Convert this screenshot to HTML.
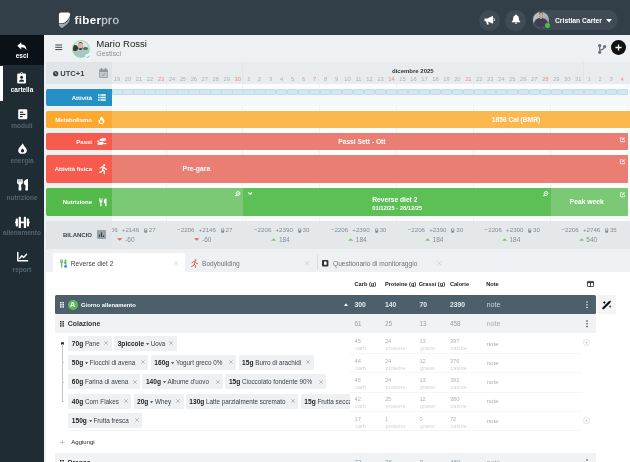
<!DOCTYPE html>
<html><head><meta charset="utf-8"><title>fiberpro</title>
<style>
*{box-sizing:border-box;margin:0;padding:0}
html,body{width:630px;height:462px;overflow:hidden;background:#fff;font-family:"Liberation Sans",sans-serif;}
body{position:relative}
.a{position:absolute}
.t{position:absolute;white-space:nowrap;line-height:1}
.b{font-weight:bold}
.w{color:#fff}
svg{position:absolute;overflow:visible}
#top{left:0;top:0;width:630px;height:35px;background:#323f49}
#side{left:0;top:35px;width:44px;height:427px;background:#1f2c34}
#hdr{left:44px;top:35px;width:586px;height:27px;background:#eef1f3}
.sl{position:absolute;left:0;width:44px;text-align:center;font-size:6.5px;font-weight:bold;color:#56636b;line-height:1}
.lab{position:absolute;left:46px;width:66px;border-radius:2px 0 0 2px}
.lt{position:absolute;right:13px;font-size:6px;font-weight:bold;color:#fff;line-height:1;white-space:nowrap}
.dn{position:absolute;top:77.3px;width:11px;text-align:center;font-size:5.8px;color:#adb3b8;line-height:1}
.dn.r{color:#ee8e88}
.chip{position:absolute;height:12px;background:#eceff1;border-radius:1px;font-size:5.8px;color:#333;line-height:12px;white-space:nowrap;padding:0 3px}
.chip b{font-size:6px;color:#222}
.chip i{font-style:normal;color:#777;margin-left:4px;font-size:6px}
.n1{position:absolute;font-size:5.8px;color:#b0b5b9;line-height:1}
.n2{position:absolute;font-size:5.5px;color:#cfd3d6;line-height:1}
</style></head><body><div id="root" style="position:absolute;left:0;top:0;width:630px;height:462px;overflow:hidden;will-change:transform;transform:translateZ(0)">

<div class="a" id="top"></div>
<div class="a" id="side"></div>
<div class="a" id="hdr"></div>
<svg style="left:58px;top:11px" width="14" height="18" viewBox="0 0 14 18">
<path d="M0.9 3.6 Q0.9 1.4 3.1 1.4 L10.2 1.5 Q12.5 1.6 12.1 3.9 Q11.5 7 9 9.6 Q6.8 12.2 4.4 12.2 L0.9 12.2 Z" fill="#fff"/>
<path d="M0.9 13 L4.6 13 Q7.2 13 9.4 10.6 Q11.4 8.4 12.1 5.8 Q12.2 10 9.6 12.8 L4.9 16.6 Q3.5 17.6 2.6 16.3 L0.9 14.2 Z" fill="#9fadb6"/>
</svg>
<div class="t b w" style="left:74.6px;top:14.1px;font-size:11.6px;letter-spacing:0.3px">fiber<span style="font-weight:normal;color:#bcc6cd;-webkit-text-stroke:0.3px #bcc6cd;letter-spacing:0.45px">pro</span></div>
<div class="a" style="left:479px;top:9.5px;width:21px;height:21px;border-radius:50%;background:#3f4c56"></div>
<div class="a" style="left:505px;top:9.5px;width:21px;height:21px;border-radius:50%;background:#3f4c56"></div>
<div class="a" style="left:531.5px;top:10px;width:86.5px;height:20px;border-radius:10px;background:#3f4c56"></div>
<svg style="left:483.8px;top:14.6px" width="11.6" height="10.6" viewBox="0 0 11 10"><path d="M0.5 3.2 H3.2 L8.6 0.6 V8.2 L3.2 5.8 H0.5 Z M2 5.8 H3.8 L4.6 9 H2.8 Z" fill="#fff"/><path d="M9.3 3 Q10.5 4.4 9.3 5.8" stroke="#fff" stroke-width="0.9" fill="none"/></svg>
<svg style="left:510.8px;top:14.2px" width="10" height="10.6" viewBox="0 0 10 11"><path d="M5 0.4 Q5.8 0.4 5.8 1.2 Q8 1.8 8 4.6 Q8 6.8 9.4 8 V8.6 H0.6 V8 Q2 6.8 2 4.6 Q2 1.8 4.2 1.2 Q4.2 0.4 5 0.4 Z M3.8 9.2 H6.2 Q6 10.4 5 10.4 Q4 10.4 3.8 9.2 Z" fill="#fff"/></svg>
<div class="a" style="left:532.8px;top:11.6px;width:16.5px;height:16.5px;border-radius:50%;background:linear-gradient(135deg,#c9c9c9 0%,#b3b3b3 50%,#8f8f8f 100%);overflow:hidden"><div class="a" style="left:1.6px;top:6.6px;width:13.4px;height:12px;border-radius:6px 6px 0 0;background:#3d4055"></div><div class="a" style="left:6.1px;top:0.5px;width:4.3px;height:5.9px;border-radius:48%;background:#5a4a42"></div><div class="a" style="left:6.3px;top:1.5px;width:3.9px;height:4.9px;border-radius:45% 45% 50% 50%;background:#c9a895"></div><div class="a" style="left:7.3px;top:6px;width:2px;height:1.6px;background:#b79683"></div></div>
<div class="a" style="left:545.3px;top:23.2px;width:5px;height:5px;border-radius:50%;background:#4fc13c"></div>
<div class="t b w" style="left:555px;top:17.6px;font-size:6.75px">Cristian Carter</div>
<svg style="left:605.5px;top:18.5px" width="6" height="4" viewBox="0 0 6 4"><path d="M0 0 H6 L3 3.6 Z" fill="#fff"/></svg>
<div class="a" style="left:0;top:35px;width:44px;height:29.5px;background:#0a1217"></div>
<div class="a" style="left:0;top:65.5px;width:3px;height:35px;background:#fff"></div>
<svg style="left:17px;top:42px" width="10" height="9" viewBox="0 0 10 9"><path d="M4.2 0.3 V2.3 Q9.6 2.4 9.4 8.4 Q8.2 5.2 4.2 5.3 V7.4 L0.3 3.8 Z" fill="#fff"/></svg>
<div class="sl" style="top:53px;color:#fff">esci</div>
<svg style="left:17.4px;top:71.8px" width="9.2" height="11.8" viewBox="0 0 9 11" preserveAspectRatio="none"><path d="M1.2 1.4 H3.2 Q3.3 0.2 4.5 0.2 Q5.7 0.2 5.8 1.4 H7.8 Q8.8 1.4 8.8 2.4 V9.8 Q8.8 10.8 7.8 10.8 H1.2 Q0.2 10.8 0.2 9.8 V2.4 Q0.2 1.4 1.2 1.4 Z" fill="#fff"/><circle cx="4.5" cy="1.5" r="0.6" fill="#1f2c34"/><circle cx="4.5" cy="5" r="1.4" fill="#1f2c34"/><path d="M2 9.2 Q2 7 4.5 7 Q7 7 7 9.2 Z" fill="#1f2c34"/></svg>
<div class="sl" style="top:87.2px;color:#fff;font-size:6.4px">cartella</div>
<svg style="left:17.5px;top:108.5px" width="9.5" height="10.5" viewBox="0 0 9.5 10.5"><rect x="0.2" y="0.2" width="9.1" height="10.1" rx="1.3" fill="#fff"/><rect x="2" y="2.6" width="3.2" height="1.2" fill="#1f2c34"/><rect x="2" y="4.8" width="5.4" height="1.2" fill="#1f2c34"/><rect x="2" y="7" width="2.6" height="1.2" fill="#1f2c34"/></svg>
<div class="sl" style="top:123.2px">moduli</div>
<svg style="left:17.5px;top:143px" width="9" height="11" viewBox="0 0 9 11"><path d="M4.8 0.2 Q5.4 2.4 7.2 4.2 Q8.8 5.8 8.8 7.4 Q8.8 10.8 4.5 10.8 Q0.2 10.8 0.2 7.4 Q0.2 5.6 1.8 4 Q4 2 4.8 0.2 Z" fill="#fff"/><path d="M4.5 5.6 Q6.2 6.8 6.2 8 Q6.2 9.4 4.5 9.4 Q2.8 9.4 2.8 8 Q2.8 7 4.5 5.6 Z" fill="#1f2c34"/></svg>
<div class="sl" style="top:158.4px">energia</div>
<svg style="left:16.9px;top:179.1px" width="11" height="11.4" viewBox="0 0 416 512" preserveAspectRatio="none"><path d="M207.9 15.2c.8 4.7 16.1 94.5 16.1 128.8 0 52.3-27.8 89.6-68.9 104.6L168 486.7c.7 13.7-10.2 25.3-24 25.3H80c-13.7 0-24.7-11.5-24-25.3l12.9-238.1C27.7 233.6 0 196.2 0 144 0 109.6 15.3 19.9 16.1 15.2 19.3-5.1 61.4-5.4 64 16.3v141.2c1.3 3.4 15.1 3.2 16 0 1.4-25.3 7.9-139.2 8-141.8 3.3-20.8 44.7-20.8 47.9 0 .2 2.7 6.6 116.5 8 141.8.9 3.2 14.8 3.4 16 0V16.3c2.6-21.6 44.8-21.4 48-1.1zm119.2 285.7l-15 185.1c-1.2 14 9.9 26 23.9 26h56c13.3 0 24-10.7 24-24V24c0-13.2-10.7-24-24-24-82.5 0-221.4 178.5-64.9 300.9z" fill="#fff"/></svg>
<div class="sl" style="top:194.7px">nutrizione</div>
<svg style="left:14.7px;top:215.6px" width="14.7" height="12.8" viewBox="0 0 640 512" preserveAspectRatio="none"><path d="M104 96H56c-13.3 0-24 10.7-24 24v104H8c-4.4 0-8 3.6-8 8v48c0 4.4 3.6 8 8 8h24v104c0 13.3 10.7 24 24 24h48c13.3 0 24-10.7 24-24V120c0-13.3-10.7-24-24-24zm528 128h-24V120c0-13.3-10.7-24-24-24h-48c-13.3 0-24 10.7-24 24v272c0 13.3 10.7 24 24 24h48c13.3 0 24-10.7 24-24V288h24c4.4 0 8-3.6 8-8v-48c0-4.4-3.6-8-8-8zM456 32h-48c-13.3 0-24 10.7-24 24v168H256V56c0-13.3-10.7-24-24-24h-48c-13.3 0-24 10.7-24 24v400c0 13.3 10.7 24 24 24h48c13.3 0 24-10.7 24-24V288h128v168c0 13.3 10.7 24 24 24h48c13.3 0 24-10.7 24-24V56c0-13.3-10.7-24-24-24z" fill="#fff"/></svg>
<div class="sl" style="top:230.3px">allenamento</div>
<svg style="left:16.5px;top:251.5px" width="11" height="10" viewBox="0 0 11 10"><path d="M0.8 0.4 V8.8 H10.6" stroke="#fff" stroke-width="1.5" fill="none" stroke-linejoin="round" stroke-linecap="round"/><path d="M2.8 6.2 L4.9 3.8 L6.6 5.4 L9.6 2.2" stroke="#fff" stroke-width="1.4" fill="none" stroke-linejoin="round" stroke-linecap="round"/></svg>
<div class="sl" style="top:266.6px">report</div>
<svg style="left:54.5px;top:44px" width="8" height="7" viewBox="0 0 8 7"><path d="M0.3 1 H7.2 M0.3 3.3 H7.2 M0.3 5.6 H7.2" stroke="#333" stroke-width="0.9"/></svg>
<div class="a" style="left:71.6px;top:39.6px;width:18.3px;height:18.3px;border-radius:50%;background:#9fdc99"></div>
<div class="a" style="left:72.7px;top:40.7px;width:16.1px;height:16.1px;border-radius:50%;background:linear-gradient(180deg,#dfe9ec 0%,#d3e0e3 40%,#a6c9cd 58%,#a8c4c5 100%);overflow:hidden"><div class="a" style="left:-1px;top:4.2px;width:6.4px;height:6.4px;border-radius:45% 55% 40% 50%;background:#2f3d2f"></div><div class="a" style="left:10.6px;top:6.4px;width:4.4px;height:3.4px;border-radius:50%;background:#5c6f62"></div><div class="a" style="left:1.2px;top:9px;width:13.6px;height:9px;border-radius:6px 6px 0 0;background:#a9c5c6"></div><div class="a" style="left:5.3px;top:0.9px;width:5.2px;height:8.2px;border-radius:50% 50% 46% 46%;background:#3b3a38"></div><div class="a" style="left:5.7px;top:2.7px;width:4.4px;height:5.2px;border-radius:40% 40% 50% 50%;background:#dcb9a3"></div><div class="a" style="left:6.4px;top:7.2px;width:3px;height:1.3px;border-radius:40%;background:#5a4236"></div></div>
<div class="a" style="left:85.4px;top:54.2px;width:5.6px;height:5.6px;border-radius:50%;background:#f5f7f8"></div>
<svg style="left:86px;top:55.3px" width="4.4" height="3.6" viewBox="0 0 5 4"><path d="M0.5 2 L1.9 3.3 L4.5 0.5" stroke="#4a9bd1" stroke-width="0.9" fill="none"/></svg>
<div class="t" style="left:96.3px;top:39.1px;font-size:9.6px;color:#222">Mario Rossi</div>
<div class="t" style="left:96.2px;top:50.2px;font-size:7px;color:#8a9096">Gestisci</div>
<svg style="left:598px;top:43.5px" width="8" height="10" viewBox="0 0 8 10"><circle cx="1.7" cy="1.7" r="1.6" fill="#6a7177"/><circle cx="1.7" cy="8.3" r="1.6" fill="#6a7177"/><circle cx="6.6" cy="2.6" r="1.6" fill="#6a7177"/><path d="M1.7 1.7 V8.3 M6.6 2.6 Q6.6 5.6 1.7 6.2" stroke="#6a7177" stroke-width="1.2" fill="none"/></svg>
<div class="a" style="left:610.8px;top:40.3px;width:14.8px;height:14.8px;border-radius:50%;background:#111"></div>
<svg style="left:614.7px;top:44.2px" width="7" height="7" viewBox="0 0 7 7"><path d="M3.5 0.4 V6.6 M0.4 3.5 H6.6" stroke="#fff" stroke-width="1.3"/></svg>
<div class="a" style="left:44px;top:62px;width:586px;height:187px;background:#fbfcfd"></div>
<div class="a" style="left:44px;top:62px;width:68px;height:187px;background:#eef1f3"></div>
<div class="a" style="left:112px;top:62px;width:518px;height:21.5px;background:#e9ecef"></div>
<div class="a" style="left:46px;top:62px;width:66px;height:21.5px;background:#e1e5e8"></div>
<svg style="left:52.7px;top:71.3px" width="5.4" height="5.4" viewBox="0 0 6 6"><circle cx="3" cy="3" r="2.9" fill="#3a4248"/><path d="M3 1.2 V3.2 L4.2 3.9" stroke="#e1e5e8" stroke-width="0.7" fill="none"/></svg>
<div class="t b" style="left:60.2px;top:70.4px;font-size:7.6px;color:#3a4248">UTC+1</div>
<svg style="left:99px;top:68px" width="9" height="10" viewBox="0 0 9 10"><rect x="0.2" y="1.2" width="8.6" height="8.8" rx="0.8" fill="#8d969c"/><rect x="1.8" y="0" width="1.4" height="2.2" rx="0.4" fill="#8d969c"/><rect x="5.8" y="0" width="1.4" height="2.2" rx="0.4" fill="#8d969c"/><rect x="0.9" y="4" width="7.2" height="5.3" fill="#c3c9cd"/><path d="M2.8 6.5 L4 7.7 L6.2 5.2" stroke="#8d969c" stroke-width="1" fill="none"/></svg>
<div class="dn" style="left:111.50px">19</div>
<div class="dn" style="left:122.48px">20</div>
<div class="dn" style="left:133.46px">21</div>
<div class="dn" style="left:144.44px">22</div>
<div class="dn r" style="left:155.42px">23</div>
<div class="dn" style="left:166.40px">24</div>
<div class="dn" style="left:177.38px">25</div>
<div class="dn" style="left:188.36px">26</div>
<div class="dn" style="left:199.34px">27</div>
<div class="dn" style="left:210.32px">28</div>
<div class="dn" style="left:221.30px">29</div>
<div class="dn r" style="left:232.28px">30</div>
<div class="dn" style="left:243.26px">1</div>
<div class="dn" style="left:254.24px">2</div>
<div class="dn" style="left:265.22px">3</div>
<div class="dn" style="left:276.20px">4</div>
<div class="dn" style="left:287.18px">5</div>
<div class="dn" style="left:298.16px">6</div>
<div class="dn r" style="left:309.14px">7</div>
<div class="dn" style="left:320.12px">8</div>
<div class="dn" style="left:331.10px">9</div>
<div class="dn" style="left:342.08px">10</div>
<div class="dn" style="left:353.06px">11</div>
<div class="dn" style="left:364.04px">12</div>
<div class="dn" style="left:375.02px">13</div>
<div class="dn r" style="left:386.00px">14</div>
<div class="dn" style="left:396.98px">15</div>
<div class="dn" style="left:407.96px">16</div>
<div class="dn" style="left:418.94px">17</div>
<div class="dn" style="left:429.92px">18</div>
<div class="dn" style="left:440.90px">19</div>
<div class="dn" style="left:451.88px">20</div>
<div class="dn r" style="left:462.86px">21</div>
<div class="dn" style="left:473.84px">22</div>
<div class="dn" style="left:484.82px">23</div>
<div class="dn" style="left:495.80px">24</div>
<div class="dn" style="left:506.78px">25</div>
<div class="dn" style="left:517.76px">26</div>
<div class="dn" style="left:528.74px">27</div>
<div class="dn r" style="left:539.72px">28</div>
<div class="dn" style="left:550.70px">29</div>
<div class="dn" style="left:561.68px">30</div>
<div class="dn" style="left:572.66px">31</div>
<div class="dn" style="left:583.64px">1</div>
<div class="dn" style="left:594.62px">2</div>
<div class="dn" style="left:605.60px">3</div>
<div class="dn r" style="left:616.58px">4</div>
<div class="t" style="left:392px;top:68px;font-size:6px;color:#333;font-weight:bold">dicembre 2025</div>
<div class="a" style="left:242px;top:62px;width:1px;height:21.5px;background:#e1e5e8"></div>
<div class="a" style="left:583px;top:62px;width:1px;height:21.5px;background:#e1e5e8"></div>
<div class="a" style="left:166px;top:83.5px;width:1px;height:137.5px;background:#f0f2f4"></div>
<div class="a" style="left:242px;top:83.5px;width:1px;height:137.5px;background:#f0f2f4"></div>
<div class="a" style="left:319px;top:83.5px;width:1px;height:137.5px;background:#f0f2f4"></div>
<div class="a" style="left:396px;top:83.5px;width:1px;height:137.5px;background:#f0f2f4"></div>
<div class="a" style="left:473px;top:83.5px;width:1px;height:137.5px;background:#f0f2f4"></div>
<div class="a" style="left:550px;top:83.5px;width:1px;height:137.5px;background:#f0f2f4"></div>
<div class="a" style="left:627px;top:83.5px;width:1px;height:137.5px;background:#f0f2f4"></div>
<div class="a" style="left:112px;top:89.2px;width:518px;height:16.5px;background:#f5f9fc"></div>
<div class="a" style="left:111.50px;top:89.2px;width:11.28px;height:5.6px;background:#d3e6f2;border:0.6px solid #c0dbea;border-radius:1px"></div>
<div class="a" style="left:122.48px;top:89.2px;width:11.28px;height:5.6px;background:#d3e6f2;border:0.6px solid #c0dbea;border-radius:1px"></div>
<div class="a" style="left:133.46px;top:89.2px;width:11.28px;height:5.6px;background:#d3e6f2;border:0.6px solid #c0dbea;border-radius:1px"></div>
<div class="a" style="left:144.44px;top:89.2px;width:11.28px;height:5.6px;background:#d3e6f2;border:0.6px solid #c0dbea;border-radius:1px"></div>
<div class="a" style="left:155.42px;top:89.2px;width:11.28px;height:5.6px;background:#d3e6f2;border:0.6px solid #c0dbea;border-radius:1px"></div>
<div class="a" style="left:166.40px;top:89.2px;width:11.28px;height:5.6px;background:#d3e6f2;border:0.6px solid #c0dbea;border-radius:1px"></div>
<div class="a" style="left:177.38px;top:89.2px;width:11.28px;height:5.6px;background:#d3e6f2;border:0.6px solid #c0dbea;border-radius:1px"></div>
<div class="a" style="left:188.36px;top:89.2px;width:11.28px;height:5.6px;background:#d3e6f2;border:0.6px solid #c0dbea;border-radius:1px"></div>
<div class="a" style="left:199.34px;top:89.2px;width:11.28px;height:5.6px;background:#d3e6f2;border:0.6px solid #c0dbea;border-radius:1px"></div>
<div class="a" style="left:210.32px;top:89.2px;width:11.28px;height:5.6px;background:#d3e6f2;border:0.6px solid #c0dbea;border-radius:1px"></div>
<div class="a" style="left:221.30px;top:89.2px;width:11.28px;height:5.6px;background:#d3e6f2;border:0.6px solid #c0dbea;border-radius:1px"></div>
<div class="a" style="left:232.28px;top:89.2px;width:11.28px;height:5.6px;background:#d3e6f2;border:0.6px solid #c0dbea;border-radius:1px"></div>
<div class="a" style="left:243.26px;top:89.2px;width:11.28px;height:5.6px;background:#d3e6f2;border:0.6px solid #c0dbea;border-radius:1px"></div>
<div class="a" style="left:254.24px;top:89.2px;width:11.28px;height:5.6px;background:#d3e6f2;border:0.6px solid #c0dbea;border-radius:1px"></div>
<div class="a" style="left:265.22px;top:89.2px;width:11.28px;height:5.6px;background:#d3e6f2;border:0.6px solid #c0dbea;border-radius:1px"></div>
<div class="a" style="left:276.20px;top:89.2px;width:11.28px;height:5.6px;background:#d3e6f2;border:0.6px solid #c0dbea;border-radius:1px"></div>
<div class="a" style="left:287.18px;top:89.2px;width:11.28px;height:5.6px;background:#d3e6f2;border:0.6px solid #c0dbea;border-radius:1px"></div>
<div class="a" style="left:298.16px;top:89.2px;width:11.28px;height:5.6px;background:#d3e6f2;border:0.6px solid #c0dbea;border-radius:1px"></div>
<div class="a" style="left:309.14px;top:89.2px;width:11.28px;height:5.6px;background:#d3e6f2;border:0.6px solid #c0dbea;border-radius:1px"></div>
<div class="a" style="left:320.12px;top:89.2px;width:11.28px;height:5.6px;background:#d3e6f2;border:0.6px solid #c0dbea;border-radius:1px"></div>
<div class="a" style="left:331.10px;top:89.2px;width:11.28px;height:5.6px;background:#d3e6f2;border:0.6px solid #c0dbea;border-radius:1px"></div>
<div class="a" style="left:342.08px;top:89.2px;width:11.28px;height:5.6px;background:#d3e6f2;border:0.6px solid #c0dbea;border-radius:1px"></div>
<div class="a" style="left:353.06px;top:89.2px;width:11.28px;height:5.6px;background:#d3e6f2;border:0.6px solid #c0dbea;border-radius:1px"></div>
<div class="a" style="left:364.04px;top:89.2px;width:11.28px;height:5.6px;background:#d3e6f2;border:0.6px solid #c0dbea;border-radius:1px"></div>
<div class="a" style="left:375.02px;top:89.2px;width:11.28px;height:5.6px;background:#d3e6f2;border:0.6px solid #c0dbea;border-radius:1px"></div>
<div class="a" style="left:386.00px;top:89.2px;width:11.28px;height:5.6px;background:#d3e6f2;border:0.6px solid #c0dbea;border-radius:1px"></div>
<div class="a" style="left:396.98px;top:89.2px;width:11.28px;height:5.6px;background:#d3e6f2;border:0.6px solid #c0dbea;border-radius:1px"></div>
<div class="a" style="left:407.96px;top:89.2px;width:11.28px;height:5.6px;background:#d3e6f2;border:0.6px solid #c0dbea;border-radius:1px"></div>
<div class="a" style="left:418.94px;top:89.2px;width:11.28px;height:5.6px;background:#d3e6f2;border:0.6px solid #c0dbea;border-radius:1px"></div>
<div class="a" style="left:429.92px;top:89.2px;width:11.28px;height:5.6px;background:#d3e6f2;border:0.6px solid #c0dbea;border-radius:1px"></div>
<div class="a" style="left:440.90px;top:89.2px;width:11.28px;height:5.6px;background:#d3e6f2;border:0.6px solid #c0dbea;border-radius:1px"></div>
<div class="a" style="left:451.88px;top:89.2px;width:11.28px;height:5.6px;background:#d3e6f2;border:0.6px solid #c0dbea;border-radius:1px"></div>
<div class="a" style="left:462.86px;top:89.2px;width:11.28px;height:5.6px;background:#d3e6f2;border:0.6px solid #c0dbea;border-radius:1px"></div>
<div class="a" style="left:473.84px;top:89.2px;width:11.28px;height:5.6px;background:#d3e6f2;border:0.6px solid #c0dbea;border-radius:1px"></div>
<div class="a" style="left:484.82px;top:89.2px;width:11.28px;height:5.6px;background:#d3e6f2;border:0.6px solid #c0dbea;border-radius:1px"></div>
<div class="a" style="left:495.80px;top:89.2px;width:11.28px;height:5.6px;background:#d3e6f2;border:0.6px solid #c0dbea;border-radius:1px"></div>
<div class="a" style="left:506.78px;top:89.2px;width:11.28px;height:5.6px;background:#d3e6f2;border:0.6px solid #c0dbea;border-radius:1px"></div>
<div class="a" style="left:517.76px;top:89.2px;width:11.28px;height:5.6px;background:#d3e6f2;border:0.6px solid #c0dbea;border-radius:1px"></div>
<div class="a" style="left:528.74px;top:89.2px;width:11.28px;height:5.6px;background:#d3e6f2;border:0.6px solid #c0dbea;border-radius:1px"></div>
<div class="a" style="left:539.72px;top:89.2px;width:11.28px;height:5.6px;background:#d3e6f2;border:0.6px solid #c0dbea;border-radius:1px"></div>
<div class="a" style="left:550.70px;top:89.2px;width:11.28px;height:5.6px;background:#d3e6f2;border:0.6px solid #c0dbea;border-radius:1px"></div>
<div class="a" style="left:561.68px;top:89.2px;width:11.28px;height:5.6px;background:#d3e6f2;border:0.6px solid #c0dbea;border-radius:1px"></div>
<div class="a" style="left:572.66px;top:89.2px;width:11.28px;height:5.6px;background:#d3e6f2;border:0.6px solid #c0dbea;border-radius:1px"></div>
<div class="a" style="left:583.64px;top:89.2px;width:11.28px;height:5.6px;background:#d3e6f2;border:0.6px solid #c0dbea;border-radius:1px"></div>
<div class="a" style="left:594.62px;top:89.2px;width:11.28px;height:5.6px;background:#d3e6f2;border:0.6px solid #c0dbea;border-radius:1px"></div>
<div class="a" style="left:605.60px;top:89.2px;width:11.28px;height:5.6px;background:#d3e6f2;border:0.6px solid #c0dbea;border-radius:1px"></div>
<div class="a" style="left:616.58px;top:89.2px;width:11.28px;height:5.6px;background:#d3e6f2;border:0.6px solid #c0dbea;border-radius:1px"></div>
<div class="lab" style="top:89.2px;height:16.5px;background:#2490c6"></div>
<div class="lab" style="top:111px;height:16.8px;background:#fda92f"></div>
<div class="lab" style="top:133px;height:16.7px;background:#f65b4d"></div>
<div class="lab" style="top:155.3px;height:27.4px;background:#f65b4d"></div>
<div class="lab" style="top:188.3px;height:27.4px;background:#55ba4c"></div>
<div class="lt" style="right:538px;top:94.9px">Attività</div>
<div class="lt" style="right:538px;top:116.9px">Metabolismo</div>
<div class="lt" style="right:538px;top:138.7px">Passi</div>
<div class="lt" style="right:538px;top:166px">Attività fisica</div>
<div class="lt" style="right:538px;top:199px">Nutrizione</div>
<svg style="left:98px;top:93.8px" width="8" height="7" viewBox="0 0 8 7"><path d="M0 0.9 H1.6 M2.4 0.9 H7.8 M0 3.5 H1.6 M2.4 3.5 H7.8 M0 6.1 H1.6 M2.4 6.1 H7.8" stroke="#fff" stroke-width="1.5"/></svg>
<svg style="left:98.2px;top:116px" width="6.8" height="8.2" viewBox="0 0 9 11"><path d="M4.9 0.2 C5.2 1.8 7 2.8 8 4.6 C9.4 7.2 8 10.8 4.5 10.8 C1 10.8 -0.4 7.4 1.1 4.8 C1.5 5.6 2.1 6 2.8 5.8 C2.4 3.4 3.3 1.4 4.9 0.2 Z" fill="#fff"/><circle cx="4.6" cy="7.6" r="2" fill="#fda92f"/></svg>
<svg style="left:97px;top:138.2px" width="9.5" height="7.5" viewBox="0 0 9.5 7.5"><ellipse cx="5.9" cy="1.7" rx="3.3" ry="1.5" fill="#fff" transform="rotate(-8 5.9 1.7)"/><ellipse cx="3.6" cy="5.5" rx="3.3" ry="1.5" fill="#fff" transform="rotate(-8 3.6 5.5)"/><rect x="0" y="2.6" width="2.4" height="1.1" fill="#fff"/><rect x="7" y="5" width="2.4" height="1.1" fill="#fff"/></svg>
<svg style="left:98.5px;top:164px" width="8" height="10" viewBox="0 0 8 10"><circle cx="5.2" cy="1.1" r="1.05" fill="#fff"/><path d="M1.2 4 L3.2 2.8 L5 3 L6 4.8 L7.6 5.2 M4.6 3 L3.6 5.8 L5.4 7.2 L5.2 9.6 M3.6 6 L2.6 7.8 L0.6 8.4" stroke="#fff" stroke-width="1.25" fill="none" stroke-linecap="round" stroke-linejoin="round"/></svg>
<svg style="left:98.6px;top:198px" width="8" height="8.4" viewBox="0 0 10.5 11"><path d="M0.4 0.2 H1.3 V3.4 H2 V0.2 H2.9 V3.4 H3.6 V0.2 H4.5 V4 Q4.5 5.4 3.3 5.8 V10.8 H1.6 V5.8 Q0.4 5.4 0.4 4 Z" fill="#fff"/><path d="M9.8 0.2 V10.8 H8.1 V7 H6.4 V3.6 Q6.4 0.6 9.8 0.2 Z" fill="#fff"/></svg>
<div class="a" style="left:112px;top:111px;width:518px;height:16.8px;background:#fbb84f"></div>
<div class="t b w" style="left:491.8px;top:116.5px;font-size:6.65px">1856 Cal (BMR)</div>
<div class="a" style="left:112px;top:133px;width:516px;height:16.7px;background:#ea7e72;border-radius:0 1px 1px 0"></div>
<div class="t b w" style="left:338.3px;top:138.9px;font-size:6.65px">Passi Sett - Ott</div>
<div class="a" style="left:112px;top:155.2px;width:516px;height:27.4px;background:#ea7e72;border-radius:0 1px 1px 0"></div>
<div class="t b w" style="left:182.6px;top:165.9px;font-size:6.8px">Pre-gara</div>
<div class="a" style="left:112px;top:188.3px;width:131px;height:27.4px;background:#7bc974"></div>
<div class="a" style="left:243px;top:188.3px;width:308px;height:27.4px;background:#5dc056"></div>
<div class="a" style="left:551px;top:188.3px;width:77px;height:27.4px;background:#7bc974;border-radius:0 1px 1px 0"></div>
<div class="t b w" style="left:372.3px;top:196.6px;font-size:6.65px">Reverse diet 2</div>
<div class="t b w" style="left:372.3px;top:206px;font-size:5.75px">01/12/25 - 28/12/25</div>
<div class="t b w" style="left:569.7px;top:199px;font-size:6.75px">Peak week</div>
<svg style="left:620.0px;top:136.5px" width="5.2" height="5.2" viewBox="0 0 5 5"><path d="M2.4 0.7 H0.4 V4.6 H4.3 V2.8" stroke="#fff" stroke-width="0.7" fill="none"/><path d="M1.8 3.2 L2 2.2 L4 0.2 L4.8 1 L2.8 3 Z" fill="#fff"/></svg>
<svg style="left:620.0px;top:158.6px" width="5.2" height="5.2" viewBox="0 0 5 5"><path d="M2.4 0.7 H0.4 V4.6 H4.3 V2.8" stroke="#fff" stroke-width="0.7" fill="none"/><path d="M1.8 3.2 L2 2.2 L4 0.2 L4.8 1 L2.8 3 Z" fill="#fff"/></svg>
<svg style="left:620.0px;top:191.5px" width="5.2" height="5.2" viewBox="0 0 5 5"><path d="M2.4 0.7 H0.4 V4.6 H4.3 V2.8" stroke="#fff" stroke-width="0.7" fill="none"/><path d="M1.8 3.2 L2 2.2 L4 0.2 L4.8 1 L2.8 3 Z" fill="#fff"/></svg>
<svg style="left:234.9px;top:191.0px" width="5.6" height="5.6" viewBox="0 0 5 5"><circle cx="2.7" cy="2.2" r="1.7" stroke="#fff" stroke-width="0.8" fill="none"/><path d="M1.5 3.4 L0.4 4.6" stroke="#fff" stroke-width="0.9"/><circle cx="2.7" cy="2.2" r="0.6" fill="#fff"/></svg>
<svg style="left:542.6px;top:191.0px" width="5.6" height="5.6" viewBox="0 0 5 5"><circle cx="2.7" cy="2.2" r="1.7" stroke="#fff" stroke-width="0.8" fill="none"/><path d="M1.5 3.4 L0.4 4.6" stroke="#fff" stroke-width="0.9"/><circle cx="2.7" cy="2.2" r="0.6" fill="#fff"/></svg>
<svg style="left:247.5px;top:192px" width="4.4" height="3" viewBox="0 0 4.4 3"><path d="M0.4 0.5 L2.2 2.3 L4 0.5" stroke="#fff" stroke-width="1.1" fill="none"/></svg>
<div class="a" style="left:46px;top:221px;width:584px;height:27.7px;background:#e1e5e8"></div>
<div class="a" style="left:112px;top:221px;width:518px;height:27.7px;background:#e4e8eb"></div>
<div class="t b" style="left:63px;top:231.7px;font-size:6px;color:#3a4248">BILANCIO</div>
<svg style="left:96.5px;top:230px" width="9" height="9" viewBox="0 0 9 9"><rect x="0" y="0" width="9" height="9" rx="1" fill="#98a1a7"/><path d="M2.5 4.4 V7 M4.5 2.4 V7 M6.5 5.4 V7" stroke="#3a4248" stroke-width="1.1"/></svg>
<div class="a" style="left:112px;top:221px;width:518px;height:27.7px;overflow:hidden">
<div class="t" style="left:-11.7px;top:6.3px;font-size:6.2px;color:#868e94">−2206</div>
<div class="t" style="left:9.8px;top:6.3px;font-size:6.2px;color:#868e94">+2146</div>
<svg style="left:32.0px;top:6.8px" width="3.4" height="5" viewBox="0 0 3.6 5"><rect x="0.2" y="0.3" width="3.2" height="4.5" rx="0.9" fill="#868e94"/><rect x="0.9" y="1" width="1.8" height="1.5" rx="0.4" fill="#e4e8eb"/></svg>
<div class="t" style="left:36.8px;top:6.3px;font-size:6.2px;color:#868e94">27</div>
<svg style="left:5.4px;top:17.3px" width="5.4" height="3" viewBox="0 0 5.4 3"><path d="M0 0.2 H5.4 L2.7 2.8 Z" fill="#e4606a"/></svg>
<div class="t" style="left:13.2px;top:15.5px;font-size:6.5px;color:#868e94">-60</div>
<div class="t" style="left:65.1px;top:6.3px;font-size:6.2px;color:#868e94">−2206</div>
<div class="t" style="left:86.6px;top:6.3px;font-size:6.2px;color:#868e94">+2146</div>
<svg style="left:108.8px;top:6.8px" width="3.4" height="5" viewBox="0 0 3.6 5"><rect x="0.2" y="0.3" width="3.2" height="4.5" rx="0.9" fill="#868e94"/><rect x="0.9" y="1" width="1.8" height="1.5" rx="0.4" fill="#e4e8eb"/></svg>
<div class="t" style="left:113.6px;top:6.3px;font-size:6.2px;color:#868e94">27</div>
<svg style="left:82.2px;top:17.3px" width="5.4" height="3" viewBox="0 0 5.4 3"><path d="M0 0.2 H5.4 L2.7 2.8 Z" fill="#e4606a"/></svg>
<div class="t" style="left:90.0px;top:15.5px;font-size:6.5px;color:#868e94">-60</div>
<div class="t" style="left:142.0px;top:6.3px;font-size:6.2px;color:#868e94">−2206</div>
<div class="t" style="left:163.5px;top:6.3px;font-size:6.2px;color:#868e94">+2390</div>
<svg style="left:185.7px;top:6.8px" width="3.4" height="5" viewBox="0 0 3.6 5"><rect x="0.2" y="0.3" width="3.2" height="4.5" rx="0.9" fill="#868e94"/><rect x="0.9" y="1" width="1.8" height="1.5" rx="0.4" fill="#e4e8eb"/></svg>
<div class="t" style="left:190.5px;top:6.3px;font-size:6.2px;color:#868e94">30</div>
<svg style="left:159.1px;top:17.3px" width="5.4" height="3" viewBox="0 0 5.4 3"><path d="M0 2.8 H5.4 L2.7 0.2 Z" fill="#7cc876"/></svg>
<div class="t" style="left:166.9px;top:15.5px;font-size:6.5px;color:#868e94">184</div>
<div class="t" style="left:218.8px;top:6.3px;font-size:6.2px;color:#868e94">−2206</div>
<div class="t" style="left:240.3px;top:6.3px;font-size:6.2px;color:#868e94">+2390</div>
<svg style="left:262.6px;top:6.8px" width="3.4" height="5" viewBox="0 0 3.6 5"><rect x="0.2" y="0.3" width="3.2" height="4.5" rx="0.9" fill="#868e94"/><rect x="0.9" y="1" width="1.8" height="1.5" rx="0.4" fill="#e4e8eb"/></svg>
<div class="t" style="left:267.4px;top:6.3px;font-size:6.2px;color:#868e94">30</div>
<svg style="left:236.0px;top:17.3px" width="5.4" height="3" viewBox="0 0 5.4 3"><path d="M0 2.8 H5.4 L2.7 0.2 Z" fill="#7cc876"/></svg>
<div class="t" style="left:243.8px;top:15.5px;font-size:6.5px;color:#868e94">184</div>
<div class="t" style="left:295.7px;top:6.3px;font-size:6.2px;color:#868e94">−2206</div>
<div class="t" style="left:317.2px;top:6.3px;font-size:6.2px;color:#868e94">+2390</div>
<svg style="left:339.4px;top:6.8px" width="3.4" height="5" viewBox="0 0 3.6 5"><rect x="0.2" y="0.3" width="3.2" height="4.5" rx="0.9" fill="#868e94"/><rect x="0.9" y="1" width="1.8" height="1.5" rx="0.4" fill="#e4e8eb"/></svg>
<div class="t" style="left:344.2px;top:6.3px;font-size:6.2px;color:#868e94">30</div>
<svg style="left:312.8px;top:17.3px" width="5.4" height="3" viewBox="0 0 5.4 3"><path d="M0 2.8 H5.4 L2.7 0.2 Z" fill="#7cc876"/></svg>
<div class="t" style="left:320.6px;top:15.5px;font-size:6.5px;color:#868e94">184</div>
<div class="t" style="left:372.6px;top:6.3px;font-size:6.2px;color:#868e94">−2206</div>
<div class="t" style="left:394.1px;top:6.3px;font-size:6.2px;color:#868e94">+2390</div>
<svg style="left:416.3px;top:6.8px" width="3.4" height="5" viewBox="0 0 3.6 5"><rect x="0.2" y="0.3" width="3.2" height="4.5" rx="0.9" fill="#868e94"/><rect x="0.9" y="1" width="1.8" height="1.5" rx="0.4" fill="#e4e8eb"/></svg>
<div class="t" style="left:421.1px;top:6.3px;font-size:6.2px;color:#868e94">30</div>
<svg style="left:389.7px;top:17.3px" width="5.4" height="3" viewBox="0 0 5.4 3"><path d="M0 2.8 H5.4 L2.7 0.2 Z" fill="#7cc876"/></svg>
<div class="t" style="left:397.5px;top:15.5px;font-size:6.5px;color:#868e94">184</div>
<div class="t" style="left:449.4px;top:6.3px;font-size:6.2px;color:#868e94">−2206</div>
<div class="t" style="left:470.9px;top:6.3px;font-size:6.2px;color:#868e94">+2746</div>
<svg style="left:493.1px;top:6.8px" width="3.4" height="5" viewBox="0 0 3.6 5"><rect x="0.2" y="0.3" width="3.2" height="4.5" rx="0.9" fill="#868e94"/><rect x="0.9" y="1" width="1.8" height="1.5" rx="0.4" fill="#e4e8eb"/></svg>
<div class="t" style="left:497.9px;top:6.3px;font-size:6.2px;color:#868e94">35</div>
<svg style="left:466.5px;top:17.3px" width="5.4" height="3" viewBox="0 0 5.4 3"><path d="M0 2.8 H5.4 L2.7 0.2 Z" fill="#7cc876"/></svg>
<div class="t" style="left:474.3px;top:15.5px;font-size:6.5px;color:#868e94">540</div>
</div>
<div class="a" style="left:44px;top:248.7px;width:586px;height:23.3px;background:#eef1f3"></div>
<div class="a" style="left:44px;top:272px;width:2px;height:190px;background:#eef1f3"></div>
<div class="a" style="left:52.7px;top:253.2px;width:132px;height:19px;background:#fff;border-radius:1.5px 1.5px 0 0"></div>
<svg style="left:59.5px;top:258.5px" width="7" height="9" viewBox="0 0 7 9"><path d="M0.2 0.2 H0.8 V2.6 H1.3 V0.2 H1.9 V2.6 H2.4 V0.2 H3 V3 Q3 4 2.2 4.3 V8.6 H1 V4.3 Q0.2 4 0.2 3 Z" fill="#5bbd55"/><path d="M6.4 0.2 V6 H5.4 V5 H4.3 V2.8 Q4.3 0.6 6.4 0.2 Z" fill="#5bbd55"/><circle cx="5.6" cy="7.4" r="1.4" fill="#2490c6"/></svg>
<div class="t" style="left:70.8px;top:260.7px;font-size:6.6px;color:#444">Reverse diet 2</div>
<svg style="left:173.8px;top:260.7px" width="4.4" height="4.4" viewBox="0 0 4.4 4.4"><path d="M0.3 0.3 L4.1 4.1 M4.1 0.3 L0.3 4.1" stroke="#c3c8cd" stroke-width="0.6"/></svg>
<svg style="left:191.3px;top:258.5px" width="7" height="9" viewBox="0 0 8 10"><circle cx="5.2" cy="1.1" r="1.05" fill="#e8573f"/><path d="M1.2 4 L3.2 2.8 L5 3 L6 4.8 L7.6 5.2 M4.6 3 L3.6 5.8 L5.4 7.2 L5.2 9.6 M3.6 6 L2.6 7.8 L0.6 8.4" stroke="#e8573f" stroke-width="1" fill="none" stroke-linecap="round" stroke-linejoin="round"/></svg>
<div class="t" style="left:202px;top:260.7px;font-size:6.6px;color:#6e7378">Bodybuilding</div>
<svg style="left:304.8px;top:260.7px" width="4.4" height="4.4" viewBox="0 0 4.4 4.4"><path d="M0.3 0.3 L4.1 4.1 M4.1 0.3 L0.3 4.1" stroke="#c3c8cd" stroke-width="0.6"/></svg>
<div class="a" style="left:316.8px;top:255px;width:0.6px;height:15px;background:#d9dde0"></div>
<svg style="left:322px;top:259.5px" width="6.4" height="6.4" viewBox="0 0 6.4 6.4"><rect x="0" y="0" width="6.4" height="6.4" rx="1" fill="#2d3439"/><path d="M2 1.6 H4.2 L4.6 2 V4.8 H2 Z" fill="#fff"/></svg>
<div class="t" style="left:333px;top:260.7px;font-size:6.6px;color:#6e7378">Questionario di monitoraggio</div>
<svg style="left:436.5px;top:260.7px" width="4.4" height="4.4" viewBox="0 0 4.4 4.4"><path d="M0.3 0.3 L4.1 4.1 M4.1 0.3 L0.3 4.1" stroke="#c3c8cd" stroke-width="0.6"/></svg>
<div class="t b" style="left:354.5px;top:282.2px;font-size:5.65px;color:#222">Carb (g)</div>
<div class="t b" style="left:384.9px;top:282.2px;font-size:5.65px;color:#222">Proteine (g)</div>
<div class="t b" style="left:418.7px;top:282.2px;font-size:5.65px;color:#222">Grassi (g)</div>
<div class="t b" style="left:449.9px;top:282.2px;font-size:5.65px;color:#222">Calorie</div>
<div class="t b" style="left:486.2px;top:282.2px;font-size:5.65px;color:#222">Note</div>
<svg style="left:586.5px;top:281px" width="7" height="6" viewBox="0 0 7 6"><rect x="0.4" y="0.4" width="6.2" height="5.2" rx="0.6" stroke="#222" stroke-width="0.8" fill="none"/><path d="M0.4 1.6 H6.6" stroke="#222" stroke-width="1"/><path d="M3.5 1.6 V5.6" stroke="#222" stroke-width="0.8"/></svg>
<div class="a" style="left:54.7px;top:295.3px;width:541px;height:19px;background:#4d5f6b;border-radius:1.5px"></div>
<div class="a" style="left:597px;top:295.3px;width:18.5px;height:19px;background:#f2f4f6;border-radius:1.5px"></div>
<svg style="left:59.7px;top:301.5px" width="4.2" height="5.8" viewBox="0 0 4 6.4" preserveAspectRatio="none"><rect x="0" y="0.0" width="1.5" height="1.6" fill="#fff"/><rect x="2.3" y="0.0" width="1.5" height="1.6" fill="#fff"/><rect x="0" y="2.3" width="1.5" height="1.6" fill="#fff"/><rect x="2.3" y="2.3" width="1.5" height="1.6" fill="#fff"/><rect x="0" y="4.6" width="1.5" height="1.6" fill="#fff"/><rect x="2.3" y="4.6" width="1.5" height="1.6" fill="#fff"/></svg>
<div class="a" style="left:67.7px;top:299.6px;width:10.3px;height:10.3px;border-radius:50%;background:#5bbd55"></div>
<div class="t b w" style="left:70.1px;top:301.3px;font-size:7.2px">A</div>
<div class="t b w" style="left:81px;top:302.6px;font-size:5.85px">Giorno allenamento</div>
<svg style="left:343.8px;top:302.8px" width="4" height="3" viewBox="0 0 4 3"><path d="M0 2.9 H4 L2 0.2 Z" fill="#fff"/></svg>
<div class="t b" style="left:354.5px;top:301.5px;font-size:6.8px;color:#e3e8eb">300</div>
<div class="t b" style="left:384.9px;top:301.5px;font-size:6.8px;color:#e3e8eb">140</div>
<div class="t b" style="left:419.4px;top:301.5px;font-size:6.8px;color:#e3e8eb">70</div>
<div class="t b" style="left:449.9px;top:301.5px;font-size:6.8px;color:#e3e8eb">2390</div>
<div class="t" style="left:486.4px;top:300.5px;font-size:7.3px;color:#cdd5da">note</div>
<svg style="left:585.6px;top:301.0px" width="2" height="7.4" viewBox="0 0 2 7.4"><circle cx="1" cy="1" r="0.75" fill="#fff"/><circle cx="1" cy="3.7" r="0.75" fill="#fff"/><circle cx="1" cy="6.4" r="0.75" fill="#fff"/></svg>
<svg style="left:601.6px;top:299.8px" width="9.5" height="9.5" viewBox="0 0 9.5 9.5"><path d="M1.3 8.2 L7.3 2.2" stroke="#111" stroke-width="2.2" stroke-linecap="round"/><path d="M2.30 0.70 L2.81 2.09 L4.20 2.60 L2.81 3.11 L2.30 4.50 L1.79 3.11 L0.40 2.60 L1.79 2.09 Z M8.10 5.10 L8.50 6.20 L9.60 6.60 L8.50 7.00 L8.10 8.10 L7.70 7.00 L6.60 6.60 L7.70 6.20 Z M8.40 0.20 L8.70 1.00 L9.50 1.30 L8.70 1.60 L8.40 2.40 L8.10 1.60 L7.30 1.30 L8.10 1.00 Z" fill="#111"/></svg>
<div class="a" style="left:54.7px;top:314.3px;width:541px;height:19.2px;background:#f0f2f4"></div>
<svg style="left:59.7px;top:321.3px" width="4.2" height="5.8" viewBox="0 0 4 6.4" preserveAspectRatio="none"><rect x="0" y="0.0" width="1.5" height="1.6" fill="#333"/><rect x="2.3" y="0.0" width="1.5" height="1.6" fill="#333"/><rect x="0" y="2.3" width="1.5" height="1.6" fill="#333"/><rect x="2.3" y="2.3" width="1.5" height="1.6" fill="#333"/><rect x="0" y="4.6" width="1.5" height="1.6" fill="#333"/><rect x="2.3" y="4.6" width="1.5" height="1.6" fill="#333"/></svg>
<div class="t b" style="left:67.8px;top:321.4px;font-size:6.9px;color:#333">Colazione</div>
<div class="t" style="left:354.5px;top:321.3px;font-size:6.4px;color:#9aa1a6">61</div>
<div class="t" style="left:384.9px;top:321.3px;font-size:6.4px;color:#9aa1a6">25</div>
<div class="t" style="left:419.4px;top:321.3px;font-size:6.4px;color:#9aa1a6">13</div>
<div class="t" style="left:449.9px;top:321.3px;font-size:6.4px;color:#9aa1a6">458</div>
<div class="t" style="left:486.4px;top:320.2px;font-size:7.3px;color:#a9afb3">note</div>
<svg style="left:585.6px;top:320.2px" width="2" height="7.4" viewBox="0 0 2 7.4"><circle cx="1" cy="1" r="0.75" fill="#222"/><circle cx="1" cy="3.7" r="0.75" fill="#222"/><circle cx="1" cy="6.4" r="0.75" fill="#222"/></svg>
<div class="a" style="left:350px;top:353.0px;width:232px;height:0.6px;background:#f5f6f7"></div>
<div class="a" style="left:66px;top:335.6px;width:284px;height:15.2px;overflow:hidden">
<div class="a" style="left:2.3px;top:0;width:43.4px;height:15.2px;background:#eef0f2;border-radius:1px;"><div class="t" style="left:3.5px;top:0;line-height:15.2px;font-size:6.3px;color:#3a3f44"><b style="font-size:6.6px;color:#222">70g</b> Pane</div>
<svg style="right:3.4px;top:5.6px" width="4" height="4" viewBox="0 0 4 4"><path d="M0.3 0.3 L3.7 3.7 M3.7 0.3 L0.3 3.7" stroke="#888e93" stroke-width="0.55"/></svg>
</div>
<div class="a" style="left:48.2px;top:0;width:62.7px;height:15.2px;background:#eef0f2;border-radius:1px;"><div class="t" style="left:3.5px;top:0;line-height:15.2px;font-size:6.3px;color:#3a3f44"><b style="font-size:6.6px;color:#222">3piccole</b><svg style="position:static;display:inline-block;margin:0 1.6px 0.7px 1.8px" width="3.2" height="2.2" viewBox="0 0 3.2 2.2"><path d="M0 0.2 H3.2 L1.6 2.1 Z" fill="#333"/></svg>Uova</div>
<svg style="right:3.4px;top:5.6px" width="4" height="4" viewBox="0 0 4 4"><path d="M0.3 0.3 L3.7 3.7 M3.7 0.3 L0.3 3.7" stroke="#888e93" stroke-width="0.55"/></svg>
</div>
</div>
<div class="n1" style="left:354.5px;top:339.4px">45</div>
<div class="n2" style="left:355.2px;top:346.3px">carb</div>
<div class="n1" style="left:384.9px;top:339.4px">24</div>
<div class="n2" style="left:385.6px;top:346.3px">proteine</div>
<div class="n1" style="left:419.4px;top:339.4px">13</div>
<div class="n2" style="left:420.1px;top:346.3px">grassi</div>
<div class="n1" style="left:449.9px;top:339.4px">397</div>
<div class="n2" style="left:450.6px;top:346.3px">calorie</div>
<div class="t" style="left:486.7px;top:340.5px;font-size:6.1px;color:#a8adb1">note</div>
<svg style="left:583.1px;top:339.4px" width="7" height="7" viewBox="0 0 7 7"><circle cx="3.5" cy="3.5" r="3.1" stroke="#c3c8cc" stroke-width="0.5" fill="none"/><path d="M3.5 2 V5 M2 3.5 H5" stroke="#c3c8cc" stroke-width="0.5"/></svg>
<div class="a" style="left:350px;top:372.3px;width:232px;height:0.6px;background:#f5f6f7"></div>
<div class="a" style="left:66px;top:354.9px;width:284px;height:15.2px;overflow:hidden">
<div class="a" style="left:2.3px;top:0;width:80.2px;height:15.2px;background:#eef0f2;border-radius:1px;"><div class="t" style="left:3.5px;top:0;line-height:15.2px;font-size:6.3px;color:#3a3f44"><b style="font-size:6.6px;color:#222">50g</b><svg style="position:static;display:inline-block;margin:0 1.6px 0.7px 1.8px" width="3.2" height="2.2" viewBox="0 0 3.2 2.2"><path d="M0 0.2 H3.2 L1.6 2.1 Z" fill="#333"/></svg>Fiocchi di avena</div>
<svg style="right:3.4px;top:5.6px" width="4" height="4" viewBox="0 0 4 4"><path d="M0.3 0.3 L3.7 3.7 M3.7 0.3 L0.3 3.7" stroke="#888e93" stroke-width="0.55"/></svg>
</div>
<div class="a" style="left:84.8px;top:0;width:85.5px;height:15.2px;background:#eef0f2;border-radius:1px;"><div class="t" style="left:3.5px;top:0;line-height:15.2px;font-size:6.3px;color:#3a3f44"><b style="font-size:6.6px;color:#222">160g</b><svg style="position:static;display:inline-block;margin:0 1.6px 0.7px 1.8px" width="3.2" height="2.2" viewBox="0 0 3.2 2.2"><path d="M0 0.2 H3.2 L1.6 2.1 Z" fill="#333"/></svg>Yogurt greco 0%</div>
<svg style="right:3.4px;top:5.6px" width="4" height="4" viewBox="0 0 4 4"><path d="M0.3 0.3 L3.7 3.7 M3.7 0.3 L0.3 3.7" stroke="#888e93" stroke-width="0.55"/></svg>
</div>
<div class="a" style="left:172.6px;top:0;width:75.1px;height:15.2px;background:#eef0f2;border-radius:1px;"><div class="t" style="left:3.5px;top:0;line-height:15.2px;font-size:6.3px;color:#3a3f44"><b style="font-size:6.6px;color:#222">15g</b> Burro di arachidi</div>
<svg style="right:3.4px;top:5.6px" width="4" height="4" viewBox="0 0 4 4"><path d="M0.3 0.3 L3.7 3.7 M3.7 0.3 L0.3 3.7" stroke="#888e93" stroke-width="0.55"/></svg>
</div>
</div>
<div class="n1" style="left:354.5px;top:358.7px">44</div>
<div class="n2" style="left:355.2px;top:365.6px">carb</div>
<div class="n1" style="left:384.9px;top:358.7px">24</div>
<div class="n2" style="left:385.6px;top:365.6px">proteine</div>
<div class="n1" style="left:419.4px;top:358.7px">12</div>
<div class="n2" style="left:420.1px;top:365.6px">grassi</div>
<div class="n1" style="left:449.9px;top:358.7px">376</div>
<div class="n2" style="left:450.6px;top:365.6px">calorie</div>
<div class="t" style="left:486.7px;top:359.8px;font-size:6.1px;color:#a8adb1">note</div>
<div class="a" style="left:350px;top:391.6px;width:232px;height:0.6px;background:#f5f6f7"></div>
<div class="a" style="left:66px;top:374.2px;width:284px;height:15.2px;overflow:hidden">
<div class="a" style="left:2.3px;top:0;width:71.8px;height:15.2px;background:#eef0f2;border-radius:1px;"><div class="t" style="left:3.5px;top:0;line-height:15.2px;font-size:6.3px;color:#3a3f44"><b style="font-size:6.6px;color:#222">60g</b> Farina di avena</div>
<svg style="right:3.4px;top:5.6px" width="4" height="4" viewBox="0 0 4 4"><path d="M0.3 0.3 L3.7 3.7 M3.7 0.3 L0.3 3.7" stroke="#888e93" stroke-width="0.55"/></svg>
</div>
<div class="a" style="left:76.4px;top:0;width:80.7px;height:15.2px;background:#eef0f2;border-radius:1px;"><div class="t" style="left:3.5px;top:0;line-height:15.2px;font-size:6.3px;color:#3a3f44"><b style="font-size:6.6px;color:#222">140g</b><svg style="position:static;display:inline-block;margin:0 1.6px 0.7px 1.8px" width="3.2" height="2.2" viewBox="0 0 3.2 2.2"><path d="M0 0.2 H3.2 L1.6 2.1 Z" fill="#333"/></svg>Albume d'uovo</div>
<svg style="right:3.4px;top:5.6px" width="4" height="4" viewBox="0 0 4 4"><path d="M0.3 0.3 L3.7 3.7 M3.7 0.3 L0.3 3.7" stroke="#888e93" stroke-width="0.55"/></svg>
</div>
<div class="a" style="left:159.4px;top:0;width:100.7px;height:15.2px;background:#eef0f2;border-radius:1px;"><div class="t" style="left:3.5px;top:0;line-height:15.2px;font-size:6.3px;color:#3a3f44"><b style="font-size:6.6px;color:#222">15g</b> Cioccolato fondente 90%</div>
<svg style="right:3.4px;top:5.6px" width="4" height="4" viewBox="0 0 4 4"><path d="M0.3 0.3 L3.7 3.7 M3.7 0.3 L0.3 3.7" stroke="#888e93" stroke-width="0.55"/></svg>
</div>
</div>
<div class="n1" style="left:354.5px;top:378.0px">46</div>
<div class="n2" style="left:355.2px;top:384.9px">carb</div>
<div class="n1" style="left:384.9px;top:378.0px">24</div>
<div class="n2" style="left:385.6px;top:384.9px">proteine</div>
<div class="n1" style="left:419.4px;top:378.0px">13</div>
<div class="n2" style="left:420.1px;top:384.9px">grassi</div>
<div class="n1" style="left:449.9px;top:378.0px">392</div>
<div class="n2" style="left:450.6px;top:384.9px">calorie</div>
<div class="t" style="left:486.7px;top:379.1px;font-size:6.1px;color:#a8adb1">note</div>
<div class="a" style="left:350px;top:410.9px;width:232px;height:0.6px;background:#f5f6f7"></div>
<div class="a" style="left:66px;top:393.5px;width:284px;height:15.2px;overflow:hidden">
<div class="a" style="left:2.3px;top:0;width:62.9px;height:15.2px;background:#eef0f2;border-radius:1px;"><div class="t" style="left:3.5px;top:0;line-height:15.2px;font-size:6.3px;color:#3a3f44"><b style="font-size:6.6px;color:#222">40g</b> Corn Flakes</div>
<svg style="right:3.4px;top:5.6px" width="4" height="4" viewBox="0 0 4 4"><path d="M0.3 0.3 L3.7 3.7 M3.7 0.3 L0.3 3.7" stroke="#888e93" stroke-width="0.55"/></svg>
</div>
<div class="a" style="left:67.5px;top:0;width:50.3px;height:15.2px;background:#eef0f2;border-radius:1px;"><div class="t" style="left:3.5px;top:0;line-height:15.2px;font-size:6.3px;color:#3a3f44"><b style="font-size:6.6px;color:#222">20g</b><svg style="position:static;display:inline-block;margin:0 1.6px 0.7px 1.8px" width="3.2" height="2.2" viewBox="0 0 3.2 2.2"><path d="M0 0.2 H3.2 L1.6 2.1 Z" fill="#333"/></svg>Whey</div>
<svg style="right:3.4px;top:5.6px" width="4" height="4" viewBox="0 0 4 4"><path d="M0.3 0.3 L3.7 3.7 M3.7 0.3 L0.3 3.7" stroke="#888e93" stroke-width="0.55"/></svg>
</div>
<div class="a" style="left:119.8px;top:0;width:112.7px;height:15.2px;background:#eef0f2;border-radius:1px;"><div class="t" style="left:3.5px;top:0;line-height:15.2px;font-size:6.3px;color:#3a3f44"><b style="font-size:6.6px;color:#222">130g</b> Latte parzialmente scremato</div>
<svg style="right:3.4px;top:5.6px" width="4" height="4" viewBox="0 0 4 4"><path d="M0.3 0.3 L3.7 3.7 M3.7 0.3 L0.3 3.7" stroke="#888e93" stroke-width="0.55"/></svg>
</div>
<div class="a" style="left:234.8px;top:0;width:71.2px;height:15.2px;background:#eef0f2;border-radius:1px;overflow:hidden;"><div class="t" style="left:3.5px;top:0;line-height:15.2px;font-size:6.3px;color:#3a3f44"><b style="font-size:6.6px;color:#222">15g</b> Frutta secca</div>
</div>
</div>
<div class="n1" style="left:354.5px;top:397.3px">42</div>
<div class="n2" style="left:355.2px;top:404.2px">carb</div>
<div class="n1" style="left:384.9px;top:397.3px">25</div>
<div class="n2" style="left:385.6px;top:404.2px">proteine</div>
<div class="n1" style="left:419.4px;top:397.3px">12</div>
<div class="n2" style="left:420.1px;top:404.2px">grassi</div>
<div class="n1" style="left:449.9px;top:397.3px">380</div>
<div class="n2" style="left:450.6px;top:404.2px">calorie</div>
<div class="t" style="left:486.7px;top:398.4px;font-size:6.1px;color:#a8adb1">note</div>
<div class="a" style="left:350px;top:430.2px;width:232px;height:0.6px;background:#f5f6f7"></div>
<div class="a" style="left:66px;top:412.8px;width:284px;height:15.2px;overflow:hidden">
<div class="a" style="left:2.3px;top:0;width:73.6px;height:15.2px;background:#eef0f2;border-radius:1px;"><div class="t" style="left:3.5px;top:0;line-height:15.2px;font-size:6.3px;color:#3a3f44"><b style="font-size:6.6px;color:#222">150g</b><svg style="position:static;display:inline-block;margin:0 1.6px 0.7px 1.8px" width="3.2" height="2.2" viewBox="0 0 3.2 2.2"><path d="M0 0.2 H3.2 L1.6 2.1 Z" fill="#333"/></svg>Frutta fresca</div>
<svg style="right:3.4px;top:5.6px" width="4" height="4" viewBox="0 0 4 4"><path d="M0.3 0.3 L3.7 3.7 M3.7 0.3 L0.3 3.7" stroke="#888e93" stroke-width="0.55"/></svg>
</div>
</div>
<div class="n1" style="left:354.5px;top:416.6px">17</div>
<div class="n2" style="left:355.2px;top:423.5px">carb</div>
<div class="n1" style="left:384.9px;top:416.6px">1</div>
<div class="n2" style="left:385.6px;top:423.5px">proteine</div>
<div class="n1" style="left:419.4px;top:416.6px">0</div>
<div class="n2" style="left:420.1px;top:423.5px">grassi</div>
<div class="n1" style="left:449.9px;top:416.6px">72</div>
<div class="n2" style="left:450.6px;top:423.5px">calorie</div>
<div class="t" style="left:486.7px;top:417.7px;font-size:6.1px;color:#a8adb1">note</div>
<svg style="left:583.1px;top:416.6px" width="7" height="7" viewBox="0 0 7 7"><circle cx="3.5" cy="3.5" r="3.1" stroke="#c3c8cc" stroke-width="0.5" fill="none"/><path d="M3.5 2 V5 M2 3.5 H5" stroke="#c3c8cc" stroke-width="0.5"/></svg>
<div class="a" style="left:61.2px;top:342.2px;width:2.6px;height:2.6px;border-radius:50%;background:#333"></div>
<div class="a" style="left:62.2px;top:344px;width:0.6px;height:57px;background:#c3c7ca"></div>
<div class="a" style="left:62.2px;top:362.2px;width:2.2px;height:0.6px;background:#c3c7ca"></div>
<div class="a" style="left:62.2px;top:381.5px;width:2.2px;height:0.6px;background:#c3c7ca"></div>
<div class="a" style="left:62.2px;top:400.8px;width:2.2px;height:0.6px;background:#c3c7ca"></div>
<div class="a" style="left:66px;top:430.4px;width:516px;height:0.6px;background:#f3f5f6"></div>
<svg style="left:59.6px;top:439.6px" width="4.6" height="4.6" viewBox="0 0 4.6 4.6"><path d="M2.3 0 V4.6 M0 2.3 H4.6" stroke="#8a9096" stroke-width="0.5"/></svg>
<div class="t" style="left:71.3px;top:438.8px;font-size:6px;color:#222">Aggiungi</div>
<div class="a" style="left:54.7px;top:453.4px;width:541px;height:12px;background:#f0f2f4"></div>
<svg style="left:59.7px;top:460.3px" width="4.2" height="5.8" viewBox="0 0 4 6.4" preserveAspectRatio="none"><rect x="0" y="0.0" width="1.5" height="1.6" fill="#333"/><rect x="2.3" y="0.0" width="1.5" height="1.6" fill="#333"/><rect x="0" y="2.3" width="1.5" height="1.6" fill="#333"/><rect x="2.3" y="2.3" width="1.5" height="1.6" fill="#333"/><rect x="0" y="4.6" width="1.5" height="1.6" fill="#333"/><rect x="2.3" y="4.6" width="1.5" height="1.6" fill="#333"/></svg>
<div class="t b" style="left:67.8px;top:460.4px;font-size:6.9px;color:#333">Pranzo</div>
<div class="t" style="left:354.5px;top:460.3px;font-size:6.4px;color:#9aa1a6">72</div>
<div class="t" style="left:384.9px;top:460.3px;font-size:6.4px;color:#9aa1a6">26</div>
<div class="t" style="left:419.4px;top:460.3px;font-size:6.4px;color:#9aa1a6">2</div>
<div class="t" style="left:449.9px;top:460.3px;font-size:6.4px;color:#9aa1a6">460</div>
<div class="t" style="left:486.4px;top:459.2px;font-size:7.3px;color:#a9afb3">note</div>
<svg style="left:585.6px;top:459.2px" width="2" height="7.4" viewBox="0 0 2 7.4"><circle cx="1" cy="1" r="0.75" fill="#222"/><circle cx="1" cy="3.7" r="0.75" fill="#222"/><circle cx="1" cy="6.4" r="0.75" fill="#222"/></svg>
</div></body></html>
